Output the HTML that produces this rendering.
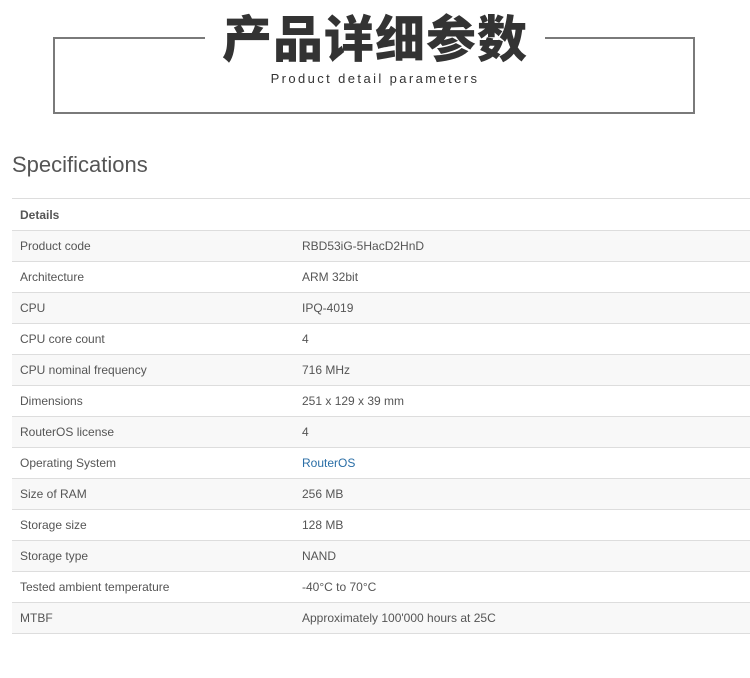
<!DOCTYPE html>
<html><head><meta charset="utf-8"><style>
body{margin:0;width:750px;height:678px;background:#fff;position:relative;overflow:hidden;font-family:"Liberation Sans",Arial,sans-serif}
.box{position:absolute;left:53px;top:37px;width:638px;height:73px;border:2px solid #7a7a7a}
.title{position:absolute;left:205px;top:8px;width:340px;height:56px;background:#fff;text-align:center;font:900 50px/56px "Noto Sans CJK SC","WenQuanYi Zen Hei",sans-serif;color:#333;letter-spacing:1px}
.sub{position:absolute;left:0;width:750px;top:71px;text-align:center;font-size:13px;letter-spacing:2.4px;color:#333}
h2{position:absolute;left:12px;top:152px;margin:0;font-weight:normal;font-size:22px;color:#555}
table{position:absolute;left:12px;top:198px;width:738px;border-collapse:collapse;font-size:12px;color:#555}
td{height:30px;border-top:1px solid #ddd;padding:0 0 0 8px;vertical-align:middle}
tr:last-child td{border-bottom:1px solid #ddd}
td:first-child{width:274px}
tr:nth-child(even) td{background:#f8f8f8}
th{height:31px;border-top:1px solid #ddd;text-align:left;padding:0 0 0 8px;font-weight:bold;color:#555;font-size:12px}
a{color:#2a6ea6;text-decoration:none}
</style></head><body>
<div class="box"></div>
<div class="title">产品详细参数</div>
<div class="sub">Product detail parameters</div>
<h2>Specifications</h2>
<table>
<tr><th colspan="2">Details</th></tr>
<tr><td>Product code</td><td>RBD53iG-5HacD2HnD</td></tr>
<tr><td>Architecture</td><td>ARM 32bit</td></tr>
<tr><td>CPU</td><td>IPQ-4019</td></tr>
<tr><td>CPU core count</td><td>4</td></tr>
<tr><td>CPU nominal frequency</td><td>716 MHz</td></tr>
<tr><td>Dimensions</td><td>251 x 129 x 39 mm</td></tr>
<tr><td>RouterOS license</td><td>4</td></tr>
<tr><td>Operating System</td><td><a>RouterOS</a></td></tr>
<tr><td>Size of RAM</td><td>256 MB</td></tr>
<tr><td>Storage size</td><td>128 MB</td></tr>
<tr><td>Storage type</td><td>NAND</td></tr>
<tr><td>Tested ambient temperature</td><td>-40°C to 70°C</td></tr>
<tr><td>MTBF</td><td>Approximately 100'000 hours at 25C</td></tr>
</table>
</body></html>
